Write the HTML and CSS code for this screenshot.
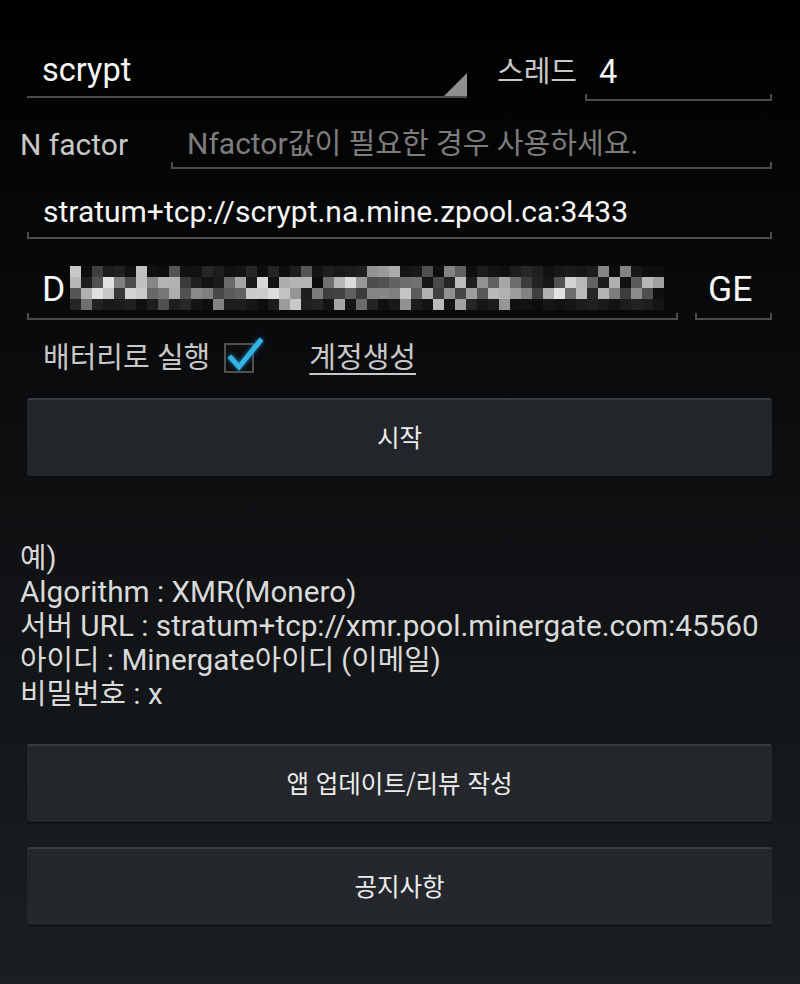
FILE: index.html
```html
<!DOCTYPE html>
<html lang="ko">
<head>
<meta charset="utf-8">
<title>Miner</title>
<link rel="stylesheet" href="styles.css">
</head>
<body>
<div class="screen">
  <div class="row row-algo">
    <div class="spinner"><span class="value spin-value">scrypt</span></div>
    <div class="label thread-label">스레드</div>
    <div class="edit edit-thread"><span class="value spin-value">4</span></div>
  </div>

  <div class="row row-nfactor">
    <div class="label nlabel">N factor</div>
    <div class="edit edit-nfactor"><span class="hint">Nfactor<span class="ko">값이 필요한 경우 사용하세요.</span></span></div>
  </div>

  <div class="row row-url">
    <div class="edit edit-full"><span class="value">stratum+tcp://scrypt.na.mine.zpool.ca:3433</span></div>
  </div>

  <div class="row row-user">
    <div class="edit edit-user"><span class="value big">D</span><svg class="mosaic" id="mosaic" width="594" height="44" viewBox="0 0 594 44"></svg></div>
    <div class="edit edit-ge"><span class="value big">GE</span></div>
  </div>

  <div class="row row-battery">
    <div class="label battery-label">배터리로 실행</div>
    <span class="checkbox">
      <svg class="check" width="46" height="42" viewBox="0 0 46 42">
        <polyline points="7,23 15,32 36,6" fill="none" stroke="#33b5e5" stroke-width="5" stroke-linecap="square" stroke-linejoin="miter"/>
      </svg>
    </span>
    <span class="link">계정생성</span>
  </div>

  <button class="btn btn-start">시작</button>

  <div class="info">
    <div class="ko">예)</div>
    <div>Algorithm : XMR(Monero)</div>
    <div><span class="ko">서버</span> URL : stratum+tcp://xmr.pool.minergate.com:45560</div>
    <div><span class="ko">아이디</span> : Minergate<span class="ko">아이디 (이메일)</span></div>
    <div><span class="ko">비밀번호</span> : x</div>
  </div>

  <button class="btn btn-update">앱 업데이트/리뷰 작성</button>
  <button class="btn btn-notice">공지사항</button>
</div>
<script src="script.js"></script>
</body>
</html>
```

FILE: styles.css
```css
* { box-sizing: border-box; }
html, body { margin: 0; padding: 0; }
body {
  width: 800px;
  height: 984px;
  overflow: hidden;
  background: linear-gradient(180deg, #000000 0%, #0b0c0e 40%, #1b1f22 100%);
  font-family: Roboto, "Noto Sans CJK KR", sans-serif;
  color: #f4f4f4;
}
.screen {
  display: flex;
  flex-direction: column;
  padding: 0 28px 0 27px;
  height: 984px;
}
.ko { font-size: 0.97em; }

.row { display: flex; align-items: flex-end; }

.value, .hint, .label { font-size: 30px; line-height: 38px; white-space: nowrap; }
.value { color: #f6f6f6; }
.value.spin-value { font-size: 32.5px; }
.value.big { font-size: 35.5px; }
.hint { color: #7c7c7c; }
.label { color: #c8c8c8; display: flex; align-items: center; }

/* spinner */
.spinner {
  position: relative;
  width: 440px;
  height: 54px;
  border-bottom: 2px solid #4c4c4c;
  display: flex;
  align-items: center;
  padding-left: 15px;
  margin-bottom: 3px;
}
.spinner::after {
  content: "";
  position: absolute;
  right: 0;
  bottom: 0;
  width: 23px;
  height: 23px;
  background: #8e8e8e;
  clip-path: polygon(100% 0, 100% 100%, 0 100%);
}

/* edit text */
.edit {
  position: relative;
  height: 52px;
  border-bottom: 2px solid #4c4c4c;
  display: flex;
  align-items: center;
  padding-left: 16px;
}
.edit::before, .edit::after {
  content: "";
  position: absolute;
  bottom: -2px;
  width: 2px;
  height: 7px;
  background: #4c4c4c;
}
.edit::before { left: 0; }
.edit::after { right: 0; }

.row-algo { margin-top: 44px; height: 57px; }
.thread-label { height: 54px; margin-bottom: 3px; margin-left: 30px; font-size: 29px; padding-top: 2px; }
.edit-thread { margin-left: auto; width: 187px; padding-bottom: 4px; padding-left: 14px; }

.row-nfactor { height: 68px; }
.nlabel { height: 52px; margin-left: -7px; padding-top: 3px; }
.edit-nfactor { margin-left: auto; width: 601px; padding-top: 3px; }

.row-url { height: 70px; }
.edit-full { width: 100%; }

.row-user { height: 81px; }
.edit-user { width: 651px; height: 60px; padding-left: 15px; }
.mosaic { display: block; margin-left: 5px; margin-top: -2px; }
.edit-ge { margin-left: auto; width: 77px; height: 60px; padding-left: 13px; }

.row-battery { height: 78px; align-items: center; padding-bottom: 2px; }
.battery-label { font-size: 29px; margin-left: 16px; }
.checkbox {
  position: relative;
  display: block;
  width: 30px;
  height: 30px;
  margin-left: 14px;
  border: 2px solid #505050;
  background: #0d0e10;
}
.check {
  position: absolute;
  left: -2px;
  top: -10px;
  filter: drop-shadow(0 0 2px #1c86c0);
}
.link {
  margin-left: 55px;
  font-size: 29px;
  line-height: 38px;
  color: #c8c8c8;
  text-decoration: underline;
  text-underline-offset: 5px;
  text-decoration-thickness: 2px;
}

.btn {
  display: flex;
  align-items: center;
  justify-content: center;
  width: 100%;
  height: 78px;
  padding: 0 0 2px 0;
  background: #22262a;
  border: none;
  border-top: 2px solid #383c40;
  border-radius: 3px;
  box-shadow: 0 1px 1px #0a0c0e;
  color: #ececec;
  font-family: "Noto Sans CJK KR", sans-serif;
  font-size: 24.5px;
  line-height: 30px;
}
.btn-start { margin-top: 0; }

.info {
  margin-top: 65px;
  margin-left: -7px;
  color: #dadada;
  font-size: 29.7px;
  line-height: 34px;
  white-space: nowrap;
}
.btn-update { margin-top: 33px; background: #23272b; }
.btn-notice { margin-top: 25px; background: #24282c; }
```

FILE: script.js
```js
(function () {
  var svg = document.getElementById('mosaic');
  if (!svg) return;
  var ns = 'http://www.w3.org/2000/svg';
  var cols = 54, rows = 4, s = 11;
  var seed = 12345;
  function rnd() { seed = (seed * 16807) % 2147483647; return seed / 2147483647; }
  var prob = [0.28, 0.82, 0.9, 0.22];
  for (var r = 0; r < rows; r++) {
    for (var c = 0; c < cols; c++) {
      var v;
      if (rnd() < prob[r]) { v = Math.floor(55 + rnd() * 175); }
      else { v = Math.floor(12 + rnd() * 28); }
      var rect = document.createElementNS(ns, 'rect');
      rect.setAttribute('x', c * s);
      rect.setAttribute('y', r * s);
      rect.setAttribute('width', s);
      rect.setAttribute('height', s);
      rect.setAttribute('fill', 'rgb(' + v + ',' + v + ',' + v + ')');
      svg.appendChild(rect);
    }
  }
})();
```
